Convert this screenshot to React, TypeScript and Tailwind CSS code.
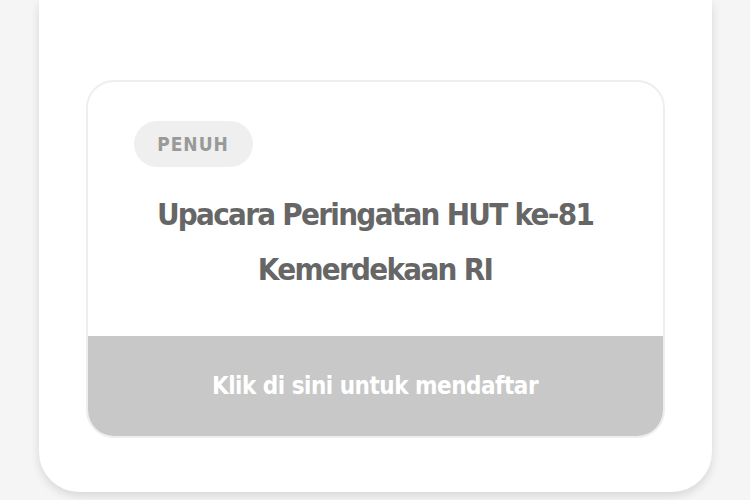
export default function App() {
  const font = { fontFamily: '"DejaVu Sans Condensed", "DejaVu Sans", sans-serif' };
  return (
    <div className="flex h-[500px] w-full justify-center overflow-hidden bg-[#f5f5f5]" style={font}>
      <div className="h-[492px] w-[673px] rounded-b-[40px] bg-white pl-[47px] pr-[47px] pt-[80px] shadow-[0_4px_10px_rgba(0,0,0,0.12)]">
        <div className="flex flex-col overflow-hidden rounded-[28px] border-2 border-[#eeeeee]">
          <div className="flex h-[254px] flex-col px-[46px] pt-[39px]">
            <span className="flex h-[46px] w-[119px] shrink-0 items-center justify-center rounded-full bg-[#efefef] text-[19px] font-bold tracking-[1px] text-[#999999]">
              PENUH
            </span>
            <h1 className="mt-[20px] text-center text-[31px] font-bold leading-[55px] tracking-[-1.7px] text-[#666666]">
              Upacara Peringatan HUT ke-81
              <br />
              Kemerdekaan RI
            </h1>
          </div>
          <button className="h-[100px] w-full bg-[#c8c8c8] text-[24px] font-bold tracking-[-0.5px] text-white">
            Klik di sini untuk mendaftar
          </button>
        </div>
      </div>
    </div>
  );
}
